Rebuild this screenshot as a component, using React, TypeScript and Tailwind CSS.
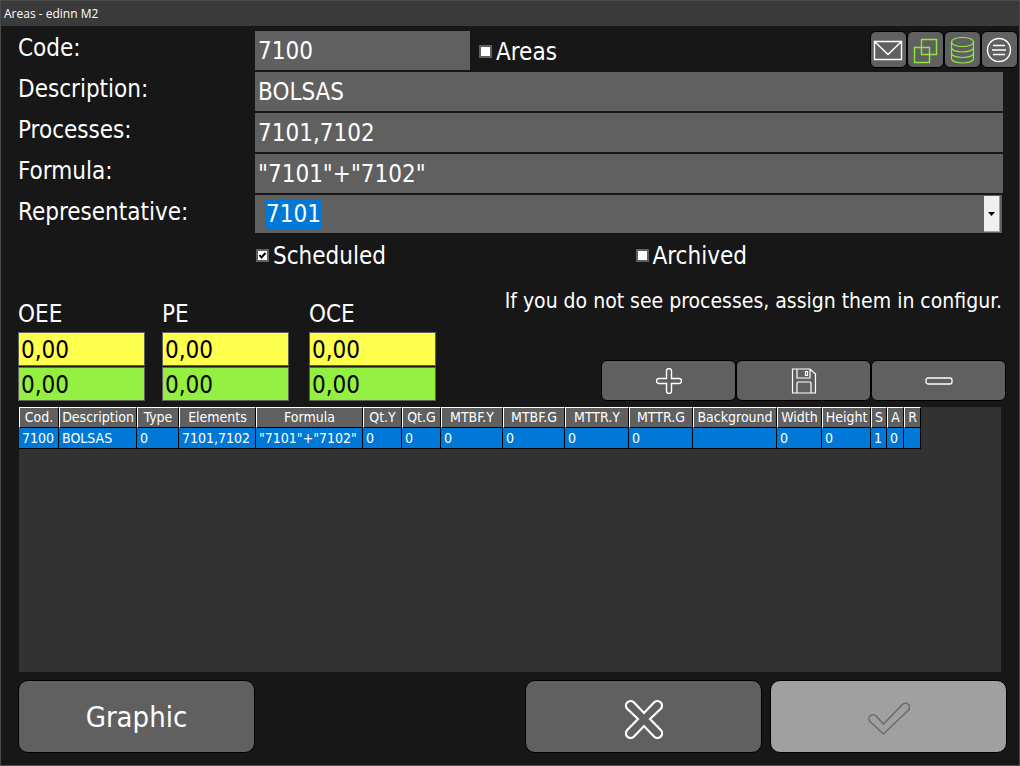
import { useRef, useState } from "react";
import type { ReactNode } from "react";

const columns: { name: string; width: string; value: string }[] = [
  { name: "Cod.", width: "w-[40px]", value: "7100" },
  { name: "Description", width: "w-[78px]", value: "BOLSAS" },
  { name: "Type", width: "w-[42px]", value: "0" },
  { name: "Elements", width: "w-[77px]", value: "7101,7102" },
  { name: "Formula", width: "w-[107px]", value: '"7101"+"7102"' },
  { name: "Qt.Y", width: "w-[39px]", value: "0" },
  { name: "Qt.G", width: "w-[39px]", value: "0" },
  { name: "MTBF.Y", width: "w-[62px]", value: "0" },
  { name: "MTBF.G", width: "w-[62px]", value: "0" },
  { name: "MTTR.Y", width: "w-[64px]", value: "0" },
  { name: "MTTR.G", width: "w-[64px]", value: "0" },
  { name: "Background", width: "w-[84px]", value: "" },
  { name: "Width", width: "w-[45px]", value: "0" },
  { name: "Height", width: "w-[49px]", value: "0" },
  { name: "S", width: "w-[16px]", value: "1" },
  { name: "A", width: "w-[17px]", value: "0" },
  { name: "R", width: "w-[17px]", value: "" },
];

function Field({ id, label, children }: { id: string; label: string; children: ReactNode }) {
  return (
    <div className="flex h-[39px] items-start">
      <label htmlFor={id} className="w-[237px] shrink-0 pt-px text-2xl">
        {label}
      </label>
      {children}
    </div>
  );
}

function TextField({ id, label, value }: { id: string; label: string; value: string }) {
  return (
    <Field id={id} label={label}>
      <input
        id={id}
        type="text"
        defaultValue={value}
        className="h-full min-w-0 flex-1 bg-[#606060] px-[3px] text-2xl outline-none"
      />
    </Field>
  );
}

function Check({ label, checked = false }: { label: string; checked?: boolean }) {
  return (
    <label className="flex items-center gap-1 text-2xl">
      <span className="grid size-[13px] shrink-0">
        <input
          type="checkbox"
          defaultChecked={checked}
          className="peer col-start-1 row-start-1 size-[13px] appearance-none border-2 border-[#606060] bg-white"
        />
        <svg
          viewBox="0 0 13 13"
          className="pointer-events-none col-start-1 row-start-1 hidden size-[13px] peer-checked:block"
        >
          <path d="M3.5 6 L5.5 8.5 L9.5 4" fill="none" stroke="#000" strokeWidth="2" />
        </svg>
      </span>
      {label}
    </label>
  );
}

function ToolButton({ label, children }: { label: string; children: ReactNode }) {
  return (
    <button
      type="button"
      aria-label={label}
      className="size-[37px] rounded-md border border-black bg-[#606060]"
    >
      <svg viewBox="0 0 35 35" className="size-[35px]" fill="none" stroke="#fff" strokeWidth="1.4">
        {children}
      </svg>
    </button>
  );
}

function ActionButton({ label, children }: { label: string; children: ReactNode }) {
  return (
    <button
      type="button"
      aria-label={label}
      className="flex h-[41px] w-[135px] items-center justify-center rounded-md border border-black bg-[#606060]"
    >
      {children}
    </button>
  );
}

function Gauge({ name }: { name: string }) {
  return (
    <div className="w-[127px]">
      <div className="h-[35px] pt-px text-2xl">{name}</div>
      <input
        aria-label={`${name} yellow limit`}
        defaultValue="0,00"
        className="block h-[34px] w-full border border-[#606060] bg-[#ffff4d] px-[2px] pt-[2px] text-2xl text-black outline-none"
      />
      <input
        aria-label={`${name} green limit`}
        defaultValue="0,00"
        className="mt-px block h-[34px] w-full border border-[#606060] bg-[#94f040] px-[2px] pt-[2px] text-2xl text-black outline-none"
      />
    </div>
  );
}

export default function App() {
  const picker = useRef<HTMLSelectElement>(null);
  const [process, setProcess] = useState("7101");

  return (
    <div className="flex min-h-screen flex-col border border-[#4a4a4a] bg-[#171717] font-['DejaVu_Sans_Condensed','Noto_Sans',sans-serif] text-white">
      <header className="flex h-[25px] shrink-0 items-center bg-[#3a3a3a] px-[3px] font-['Open_Sans',sans-serif] text-xs">
        <h1>Areas - edinn M2</h1>
      </header>

      <main className="flex flex-1 flex-col pt-[5px] pb-3 pl-[17px]">
        <div className="flex flex-col gap-[2px] pr-4">
          <Field id="code" label="Code:">
            <input
              id="code"
              type="text"
              defaultValue="7100"
              className="mr-[9px] h-full w-[215px] bg-[#606060] px-[3px] text-2xl outline-none"
            />
            <div className="flex h-[41px] items-center">
              <Check label="Areas" />
            </div>
            <div className="-mr-4 ml-auto flex pr-px">
              <ToolButton label="Messages">
                <path d="M3.5 9.5 H30.5 V27.5 H3.5 Z M3.5 9.5 L17 22.5 L30.5 9.5" />
              </ToolButton>
              <ToolButton label="Windows">
                <path d="M13.5 7.5 H28.5 V22.5 H13.5 Z M6.5 15.5 H21.5 V30.5 H6.5 Z" stroke="#8de83c" />
              </ToolButton>
              <ToolButton label="Database">
                <g stroke="#8de83c" strokeWidth="1.2">
                  <ellipse cx="17.5" cy="10" rx="11" ry="4.5" />
                  <path d="M6.5 10 V26.5 C6.5 32.5 28.5 32.5 28.5 26.5 V10 M6.5 15.5 C6.5 21.5 28.5 21.5 28.5 15.5 M6.5 21 C6.5 27 28.5 27 28.5 21" />
                </g>
              </ToolButton>
              <ToolButton label="Menu">
                <circle cx="17" cy="18" r="11.5" />
                <path d="M11 13.5 H23 M10 18 H24 M11 22.5 H23" />
              </ToolButton>
            </div>
          </Field>
          <TextField id="description" label="Description:" value="BOLSAS" />
          <TextField id="processes" label="Processes:" value="7101,7102" />
          <TextField id="formula" label="Formula:" value={'"7101"+"7102"'} />
          <Field id="representative" label="Representative:">
            <div className="mr-px flex h-[38px] flex-1 items-center justify-between bg-[#606060] pr-[2px] pl-[11px]">
              <select
                id="representative"
                ref={picker}
                value={process}
                onChange={(event) => setProcess(event.target.value)}
                className="field-sizing-content h-[29px] appearance-none bg-[#0078d7] text-2xl/7 outline-none"
              >
                <option>7101</option>
                <option>7102</option>
              </select>
              <button
                type="button"
                aria-label="Open list"
                onClick={() => picker.current?.showPicker()}
                className="flex h-[36px] w-4 items-center justify-center border-r border-b border-[#a0a0a0] bg-[#f0f0f0]"
              >
                <svg viewBox="0 0 7 4" className="h-1 w-[7px]">
                  <path d="M0 0 H7 L3.5 4 Z" fill="#000" />
                </svg>
              </button>
            </div>
          </Field>
          <div className="grid h-[39px] grid-cols-2 gap-3 pl-[238px]">
            <Check label="Scheduled" checked />
            <Check label="Archived" />
          </div>
        </div>

        <div className="mt-3 flex items-end justify-between pr-3">
          <div className="flex">
            <Gauge name="OEE" />
            <div className="ml-[17px]">
              <Gauge name="PE" />
            </div>
            <div className="ml-5">
              <Gauge name="OCE" />
            </div>
          </div>
          <div className="flex flex-col items-end gap-[45px]">
            <p className="pr-[5px] text-[21px]/7">If you do not see processes, assign them in configur.</p>
            <div className="flex pr-px">
              <ActionButton label="Add">
                <svg viewBox="0 0 26 26" className="size-[26px]" fill="none" stroke="#fff" strokeWidth="1.4">
                  <path d="M10.5 3 a2.5 2.5 0 0 1 5 0 V10.5 H23 a2.5 2.5 0 0 1 0 5 H15.5 V23 a2.5 2.5 0 0 1 -5 0 V15.5 H3 a2.5 2.5 0 0 1 0 -5 H10.5 Z" />
                </svg>
              </ActionButton>
              <ActionButton label="Save">
                <svg viewBox="0 0 26 26" className="size-[26px]" fill="none" stroke="#fff" strokeWidth="1.2">
                  <path d="M1.5 1 H19 L24.5 6 V25 H1.5 Z M6 1 V10 H19 V1 M14.5 3.5 H16.5 V7.5 H14.5 Z M6 25 V15 L7 14 H19 L20 15 V25" />
                </svg>
              </ActionButton>
              <ActionButton label="Remove">
                <svg viewBox="0 0 28 8" className="h-2 w-7" fill="none" stroke="#fff" strokeWidth="1.3">
                  <rect x="1" y="1" width="26" height="6" rx="2" />
                </svg>
              </ActionButton>
            </div>
          </div>
        </div>

        <div className="mt-[6px] mr-[18px] ml-px flex-1 bg-[#323232]">
          <table className="w-[902px] table-fixed border-separate border-spacing-0 text-sm/5">
            <thead>
              <tr className="h-[21px]">
                {columns.map((column) => (
                  <th
                    key={column.name}
                    className={`${column.width} border border-t-white border-r-black border-b-black border-l-white bg-[#606060] p-0 text-center leading-[19px] font-normal whitespace-nowrap`}
                  >
                    {column.name}
                  </th>
                ))}
              </tr>
            </thead>
            <tbody>
              <tr className="h-[21px]">
                {columns.map((column) => (
                  <td
                    key={column.name}
                    className="border-r border-b border-black bg-[#0078d7] p-0 pl-[3px] whitespace-nowrap"
                  >
                    {column.value}
                  </td>
                ))}
              </tr>
            </tbody>
          </table>
        </div>

        <div className="mt-2 flex h-[73px] pr-3 text-[29px]">
          <button type="button" className="w-[237px] rounded-[10px] border border-black bg-[#606060] pt-[2px]">
            Graphic
          </button>
          <button
            type="button"
            aria-label="Cancel"
            className="mr-2 ml-auto flex w-[237px] items-center justify-center rounded-[10px] border border-black bg-[#606060]"
          >
            <svg viewBox="0 0 40 40" className="mt-1 size-10" fill="none" stroke="#fff" strokeWidth="2.2">
              <path d="M20 14 L30 3.5 A4.6 4.6 0 0 1 36.8 9.8 L26 20 L36.8 31 A4.6 4.6 0 0 1 30 37.5 L20 27 L10 37.5 A4.6 4.6 0 0 1 3.2 31 L14 20 L3.2 9.8 A4.6 4.6 0 0 1 10 3.5 Z" />
            </svg>
          </button>
          <button
            type="button"
            aria-label="Accept"
            disabled
            className="flex w-[237px] items-center justify-center rounded-[10px] border border-black bg-[#a0a0a0]"
          >
            <svg viewBox="0 0 42 34" className="mt-1 h-[34px] w-[42px]" fill="none" stroke="#6c6c6c" strokeWidth="1.6">
              <path d="M15.5 22 L34.5 2.5 A3.8 3.8 0 0 1 40.5 8 L15.5 32 L2 19.5 A3.6 3.6 0 0 1 8 14 Z" />
            </svg>
          </button>
        </div>
      </main>
    </div>
  );
}
